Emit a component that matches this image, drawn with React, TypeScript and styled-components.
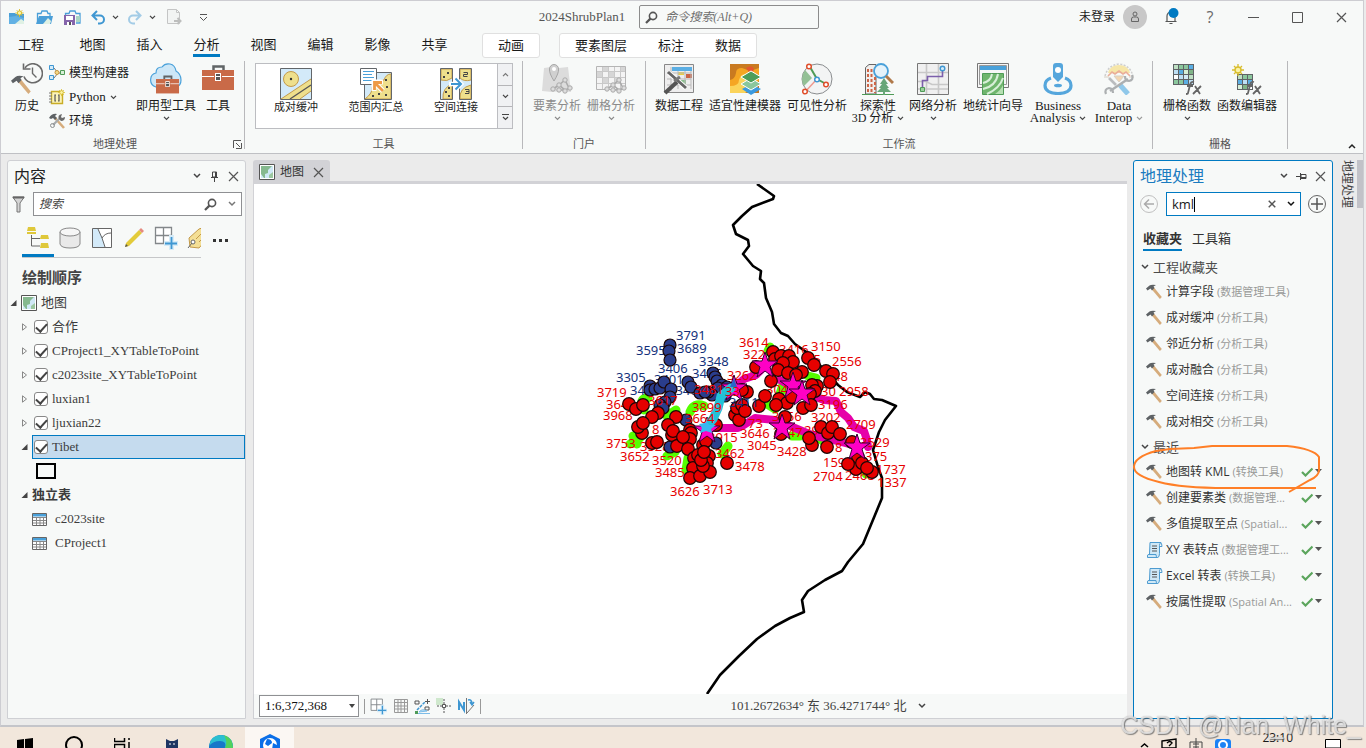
import React from "react";
import styled, { createGlobalStyle } from "styled-components";

const song = `"Liberation Serif", "Noto Sans CJK SC", serif`;
const sans = `"Open Sans", "Noto Sans CJK SC", sans-serif`;
const blue = "#007ac2";
const grey = "#6a6a6a";

const Global = createGlobalStyle`
  * { box-sizing: border-box; }
  body { margin: 0; background: #ebebeb; color: #1a1a1a; font: 12px/16px ${song}; }
  button { border: 0; padding: 0; background: none; font: inherit; color: inherit; cursor: pointer; }
  input, select { font: inherit; color: inherit; border: 0; outline: 0; background: none; padding: 0; min-width: 0; }
  svg { display: block; flex: none; }
  ul { list-style: none; margin: 0; padding: 0; }
  h2, h3 { margin: 0; font-weight: 400; }
`;

/* ---------- page frame ---------- */

const Screen = styled.div`
  min-height: 100vh;
  display: flex;
  flex-direction: column;
  overflow: hidden;
`;
const AppWindow = styled.div`
  flex: 1;
  display: flex;
  flex-direction: column;
  margin-right: 2px;
  border: 1px solid #cdcdd2;
  border-bottom: 2px solid #c4c5ca;
`;
const Body = styled.div`
  flex: 1;
  display: flex;
  gap: 6px;
  padding: 6px 0 6px 6px;
  min-height: 0;
`;

/* ---------- title bar ---------- */

const TitleBar = styled.header`
  display: grid;
  grid-template-columns: 1fr auto 1fr;
  align-items: center;
  height: 32px;
  background: #f7f9f8;
`;
const QuickTools = styled.div`
  display: flex;
  align-items: center;
  padding-left: 7px;
`;
const QuickButton = styled.button<{ $w?: number; $dim?: boolean }>`
  width: ${(p) => p.$w ?? 28}px;
  opacity: ${(p) => (p.$dim ? 0.45 : 1)};
`;
const TitleCenter = styled.div`
  display: flex;
  align-items: center;
  gap: 14px;
  padding-right: 6px;
  color: #555;
  font-size: 13px;
`;
const CommandSearch = styled.label`
  display: flex;
  align-items: center;
  gap: 7px;
  width: 180px;
  height: 24px;
  padding: 0 5px;
  border: 1px solid #8c8c8c;
  border-radius: 2px;
  font-size: 12px;
  input { flex: 1; }
  input::placeholder { font-style: italic; color: #6e6e6e; opacity: 1; }
`;
const TitleRight = styled.div`
  display: flex;
  align-items: center;
  justify-content: flex-end;
`;
const Avatar = styled.button`
  display: grid;
  place-items: center;
  width: 24px;
  height: 24px;
  margin: 0 6px 0 8px;
  border-radius: 50%;
  background: #c8c8c8;
`;
const WinButton = styled.button<{ $w?: number }>`
  display: grid;
  place-items: center;
  width: ${(p) => p.$w ?? 44}px;
  height: 32px;
  color: ${grey};
  font: 16px/20px "Open Sans", sans-serif;
`;

/* ---------- ribbon ---------- */

const TabRow = styled.nav`
  display: flex;
  height: 26px;
  background: #f7f9f8;
  font-size: 13px;
`;
const Tab = styled.button<{ $first?: boolean; $active?: boolean }>`
  width: ${(p) => (p.$first ? 60 : 57)}px;
  margin-right: ${(p) => (p.$first ? 3 : 0)}px;
  height: 24px;
  span {
    display: inline-block;
    height: 24px;
    line-height: 24px;
    border-bottom: 3px solid ${(p) => (p.$active ? blue : "transparent")};
  }
`;
const ContextTabs = styled.div<{ $gap: number }>`
  display: flex;
  align-items: center;
  gap: 31px;
  height: 25px;
  margin-left: ${(p) => p.$gap}px;
  padding: 0 15px;
  border: 1px solid #e0e0e0;
  border-radius: 3px;
  background: #fff;
`;
const Ribbon = styled.section`
  display: flex;
  position: relative;
  height: 95px;
  padding-top: 2px;
  background: #f7f9f8;
  border-bottom: 1px solid #bfc0c4;
`;
const Group = styled.section<{ $w: number }>`
  display: flex;
  flex-direction: column;
  position: relative;
  width: ${(p) => p.$w}px;
  height: 88px;
  border-right: 1px solid #b8b8bb;
`;
const GroupBody = styled.div<{ $gap?: number; $pad?: number }>`
  flex: 1;
  display: flex;
  gap: ${(p) => p.$gap ?? 6}px;
  padding: 2px 0 0 ${(p) => p.$pad ?? 10}px;
`;
const GroupLabel = styled.div<{ $shift?: number }>`
  height: 13px;
  margin-bottom: -2px;
  padding-right: ${(p) => p.$shift ?? 0}px;
  line-height: 13px;
  font-size: 11px;
  text-align: center;
  color: #555;
`;
const Launcher = styled.button`
  position: absolute;
  right: 2px;
  bottom: 0;
`;
const BigButton = styled.button<{ $w: number; $off?: boolean }>`
  display: flex;
  flex-direction: column;
  align-items: center;
  width: ${(p) => p.$w}px;
  height: 64px;
  color: ${(p) => (p.$off ? "#8b8b8b" : "#1a1a1a")};
  line-height: 12px;
  white-space: nowrap;
  > svg:first-child { margin-bottom: 5px; }
`;
const Latin = styled.span`
  font-size: 13px;
`;
const LabelLine = styled.span`
  display: flex;
  align-items: center;
  gap: 4px;
  height: 12px;
`;
const SmallStack = styled.div`
  display: flex;
  flex-direction: column;
  width: 79px;
  margin: -2px 0 0 4px;
`;
const SmallButton = styled.button`
  display: flex;
  align-items: center;
  gap: 4px;
  height: 24px;
  white-space: nowrap;
`;
const Gallery = styled.div`
  display: flex;
  width: 258px;
  height: 66px;
  border: 1px solid #bcbdc1;
  background: #fff;
`;
const GalleryItem = styled.button`
  display: flex;
  flex-direction: column;
  align-items: center;
  gap: 1px;
  width: 80px;
  padding-top: 4px;
  font-size: 11px;
  line-height: 12px;
`;
const GalleryScroll = styled.div`
  display: flex;
  flex-direction: column;
  width: 15px;
  margin-left: auto;
  border-left: 1px solid #bcbdc1;
  button {
    flex: 1;
    display: grid;
    place-items: center;
    background: #f0f1f3;
    border-bottom: 1px solid #b5b5b8;
  }
  button:last-child { border-bottom: 0; }
`;
const Collapse = styled.button`
  position: absolute;
  right: 6px;
  bottom: 4px;
`;

/* ---------- panels ---------- */

const Panel = styled.aside<{ $w: number; $active?: boolean }>`
  position: relative;
  flex: none;
  width: ${(p) => p.$w}px;
  border: 1px solid ${(p) => (p.$active ? blue : "#cfd0d4")};
  border-radius: 3px 3px 0 0;
  background: #f7f9f8;
`;
const PanelHead = styled.header<{ $active?: boolean }>`
  display: flex;
  align-items: center;
  gap: 8px;
  height: 30px;
  padding: 0 6px;
  h2 { flex: 1; font: 16px/20px ${sans}; color: ${(p) => (p.$active ? "#1a7bc0" : "#222")}; }
`;
const SearchRow = styled.div<{ $gap: number }>`
  display: flex;
  align-items: center;
  gap: ${(p) => p.$gap}px;
  height: 26px;
  padding: 0 3px 0 4px;
`;
const SearchBox = styled.label<{ $active?: boolean }>`
  flex: 1;
  display: flex;
  align-items: center;
  gap: 11px;
  min-width: 0;
  height: 24px;
  padding: 0 5px;
  border: 1px solid ${(p) => (p.$active ? blue : "#8f9093")};
  background: #fff;
  > input { flex: 1; }
  > input::placeholder { font-style: italic; color: #444; opacity: 1; }
`;
const Typed = styled.span`
  flex: 1;
  display: flex;
  align-items: center;
  font: 13px/18px ${sans};
  input { field-sizing: content; }
`;
const Caret = styled.i`
  width: 1px;
  height: 15px;
  background: #000;
`;
const ViewTabs = styled.div`
  display: flex;
  align-items: center;
  height: 41px;
  padding-left: 14px;
`;
const ViewStrip = styled.div`
  display: flex;
  width: 179px;
  height: 35px;
  margin-top: 5px;
  border-bottom: 1px solid #c6c7c9;
  overflow: hidden;
`;
const ViewTab = styled.button<{ $on?: boolean }>`
  flex: none;
  display: grid;
  place-items: center;
  width: 32px;
  border-bottom: 3px solid ${(p) => (p.$on ? blue : "transparent")};
`;
const MoreViews = styled.button`
  display: grid;
  place-items: center;
  width: 38px;
  height: 24px;
  margin-top: 6px;
`;
const TreeTitle = styled.h3`
  height: 33px;
  padding: 5px 14px 0;
  font: bold 15px/28px ${sans};
  color: #444;
`;
const TreeRow = styled.li<{ $indent?: number; $bold?: boolean }>`
  display: flex;
  align-items: center;
  gap: 4px;
  height: 24px;
  padding-left: ${(p) => p.$indent ?? 2}px;
  color: #3c3c3c;
  font-size: 13px;
  font-weight: ${(p) => (p.$bold ? 700 : 400)};
`;
const Layer = styled.label<{ $on?: boolean }>`
  flex: 1;
  display: flex;
  align-items: center;
  gap: 4px;
  height: 24px;
  padding-left: 1px;
  border: 1px solid ${(p) => (p.$on ? blue : "transparent")};
  background: ${(p) => (p.$on ? "#c5dbee" : "transparent")};
`;
const Check = styled.input`
  appearance: none;
  display: grid;
  place-items: center;
  width: 14px;
  height: 14px;
  margin: 0;
  border: 1px solid #888;
  border-radius: 3px;
  background: #fff;
  &:checked::after {
    content: "";
    width: 5px;
    height: 9px;
    border: solid #444;
    border-width: 0 2px 2px 0;
    transform: translateY(-1px) rotate(42deg);
  }
`;
const Swatch = styled.i`
  width: 20px;
  height: 16px;
  border: 2px solid #000;
`;

/* ---------- map ---------- */

const MapPane = styled.main`
  flex: 1;
  min-width: 0;
  display: flex;
  flex-direction: column;
  margin-left: 1px;
`;
const MapTabs = styled.div`
  display: flex;
  height: 24px;
  border-bottom: 3px solid #d2d2d6;
`;
const MapTab = styled.div`
  display: flex;
  align-items: center;
  gap: 5px;
  width: 77px;
  height: 24px;
  padding: 0 6px;
  border-radius: 3px 3px 0 0;
  background: #d2d2d6;
  color: #333;
  button { margin-left: auto; }
`;
const MapView = styled.div`
  flex: 1;
  min-height: 0;
  position: relative;
  overflow: hidden;
  background: #fff;
  border-left: 1px solid #d2d2d6;
  > svg { position: absolute; inset: 0; width: 100%; height: 100%; }
`;
const MapStatus = styled.footer`
  display: flex;
  align-items: center;
  gap: 5px;
  height: 25px;
  padding-left: 5px;
  background: #f7f9f8;
  border: solid #cfd0d4;
  border-width: 0 0 1px 1px;
`;
const ScaleBox = styled.div`
  position: relative;
  width: 100px;
  height: 22px;
  select {
    appearance: none;
    width: 100%;
    height: 100%;
    padding-left: 5px;
    border: 1px solid #8f9093;
    background: #fff;
    font-size: 13px;
    color: #111;
  }
  svg { position: absolute; right: 4px; top: 9px; pointer-events: none; }
`;
const Rule = styled.i`
  width: 1px;
  height: 15px;
  background: #999;
`;
const Coordinates = styled.div`
  flex: 1;
  display: flex;
  justify-content: center;
  align-items: center;
  gap: 10px;
  padding-left: 44px;
  font-size: 13px;
  color: #444;
`;

/* ---------- geoprocessing ---------- */

const ToolTabs = styled.div`
  display: flex;
  gap: 10px;
  height: 38px;
  padding: 10px 9px 0;
  font: 13px/18px ${sans};
`;
const ToolTab = styled.button<{ $on?: boolean }>`
  height: 24px;
  color: #333;
  font-weight: ${(p) => (p.$on ? 700 : 400)};
  border-bottom: 2px solid ${(p) => (p.$on ? blue : "transparent")};
`;
const Section = styled.h3`
  display: flex;
  align-items: center;
  gap: 4px;
  height: 24px;
  padding-left: 7px;
  font: 13px/18px ${sans};
  color: #4c4c4c;
`;
const ToolRow = styled.button`
  display: flex;
  align-items: center;
  width: 100%;
  height: 26px;
  padding: 0 10px 0 12px;
  font: 12px/18px ${sans};
  color: #333;
  white-space: nowrap;
`;
const ToolName = styled.span`
  flex: 1;
  min-width: 0;
  margin: 0 9px 0 3px;
  overflow: hidden;
  text-overflow: ellipsis;
  text-align: left;
  color: #999;
  font-size: 11px;
  b { font-weight: 400; font-size: 12px; color: #333; margin-right: 3px; }
`;
const Annotation = styled.svg`
  position: absolute;
  left: -2px;
  top: 280px;
  pointer-events: none;
`;
const SideStrip = styled.aside`
  flex: none;
  display: flex;
  gap: 2px;
  width: 24px;
`;
const SideTab = styled.button`
  writing-mode: vertical-rl;
  text-orientation: sideways;
  height: 48px;
  line-height: 15px;
  color: #444;
`;
const SideThumb = styled.i`
  width: 6px;
  height: 48px;
  margin-left: auto;
  background: #c2c2c8;
`;

/* ---------- taskbar ---------- */

const Taskbar = styled.footer`
  display: flex;
  height: 21px;
  overflow: hidden;
  background: #f2e7dc;
`;
const TaskItem = styled.button<{ $on?: boolean }>`
  display: flex;
  justify-content: center;
  width: 49px;
  background: ${(p) => (p.$on ? "#fbf7f3" : "transparent")};
`;
const Tray = styled.div`
  display: flex;
  gap: 12px;
  margin-left: auto;
  padding-right: 25px;
  font: 12px/22px "Open Sans", sans-serif;
  time { margin: 0 20px 0 19px; }
`;
const Watermark = styled.div`
  position: fixed;
  right: 5px;
  bottom: 8px;
  font: 25px/30px "Liberation Sans", sans-serif;
  color: rgba(245, 245, 245, 0.75);
  text-shadow: 1px 1px 1px rgba(90, 90, 90, 0.7), 0 0 1px rgba(90, 90, 90, 0.5);
  pointer-events: none;
`;

/* ---------- icons ---------- */

type IconProps = { children: React.ReactNode; w?: number; h?: number; box?: string };
const Icon = ({ children, w = 16, h = w, box }: IconProps) => (
  <svg width={w} height={h} viewBox={box ?? `0 0 ${w} ${h}`} fill="none" aria-hidden="true">
    {children}
  </svg>
);

const Chevron = ({ up = false, color = "#444", w = 7 }) => (
  <Icon w={w} h={w === 7 ? 5 : 6} box="0 0 8 6">
    <path d={up ? "M1 5 4 2 7 5" : "M1 1 4 4 7 1"} stroke={color} strokeWidth="1.5" />
  </Icon>
);
const Close = ({ s = 11 }) => (
  <Icon w={s} box="0 0 11 11">
    <path d="M1 1 10 10M10 1 1 10" stroke="#555" strokeWidth={s < 10 ? 2 : 1.2} />
  </Icon>
);
const Lens = () => (
  <Icon w={13} box="0 0 13 13">
    <circle cx="8" cy="5" r="3.6" stroke="#555" strokeWidth="1.6" />
    <path d="M5.4 7.6 1 12" stroke="#555" strokeWidth="2.2" />
  </Icon>
);
const Pin = ({ side = false }) => (
  <Icon w={11} box="0 0 11 11">
    <g transform={side ? "rotate(90 5.500 5.500)" : undefined}>
      <path d="M3.500 1h4v5h-4zM2 6.500h7M5.500 6.500V11M6.500 1v5" stroke="#444" />
    </g>
  </Icon>
);
const Sun = ({ x = 0, y = 0, s = 1 }) => (
  <g transform={`translate(${x} ${y}) scale(${s})`} stroke="#d9bd2c">
    <path d="M0-6V6M-6 0H6M-4-4 4 4M4-4-4 4" strokeWidth="1.3" />
    <circle r="3" fill="#fbf3a5" strokeWidth="1.4" />
  </g>
);
const NewProject = () => (
  <Icon w={17}>
    <path d="M1 4h6l1 1h8v10H1z" fill="#4a9fd8" />
    <path d="M1 15V8l7-1 8 2v6z" fill="#62b1e4" />
    <path d="m7 15 6-5 3 2v3z" fill="#dff1e4" />
    <Sun x={11.5} y={4} s={0.7} />
  </Icon>
);
const OpenProject = () => (
  <Icon w={17}>
    <path d="M1.500 14V4.500H5L6 2h5l1 2.500h2V8" stroke="#4a9fd8" strokeWidth="1.300" />
    <path d="M3 7h14l-2 8H0z" fill="#4a9fd8" />
    <path d="m7 15 5-6 3 3-1 3z" fill="#dff1e4" />
  </Icon>
);
const SaveProject = () => (
  <Icon w={17}>
    <path d="M1.500 8V4.500H5L6 2h5l1 2.500h4V14h-4" stroke="#4a9fd8" strokeWidth="1.300" />
    <path d="M12 7h4v6h-4z" fill="#a9d6c4" />
    <path d="M0 6h11v10H0z" fill="#8565ab" />
    <path d="M2 7h7v4H2zM3 13h5v3H3z" fill="#fff" />
    <path d="M5 13h2v3H5z" fill="#555" />
  </Icon>
);
const Undo = ({ flip = false }) => (
  <Icon w={15}>
    <g transform={flip ? "translate(15 0) scale(-1 1)" : undefined}>
      <path d="M6 1 1.500 5.500 6 10M2 5.500h7a4 4 0 0 1 0 8H7" stroke="#3f97d2" strokeWidth="2" />
    </g>
  </Icon>
);
const Export = () => (
  <Icon w={16}>
    <path d="M1.500.5h9l3 3v11h-12zM10.500.5v3h3" stroke="#888" fill="#eee" />
    <path d="M8 12h6M11.500 9l3 3-3 3" stroke="#777" strokeWidth="2" />
  </Icon>
);
const Customize = () => (
  <Icon w={9}>
    <path d="M1 1.500h7M1 4l3.500 3.500L8 4" stroke="#555" />
  </Icon>
);
const Bell = () => (
  <Icon w={18}>
    <path d="M3.500 13.500h11M5 13V8a4 4 0 0 1 4-4 4 4 0 0 1 4 4v5M7.500 15.500h3" stroke="#555" strokeWidth="1.200" />
    <circle cx="11.500" cy="5" r="5" fill={blue} />
  </Icon>
);
const Person = () => (
  <Icon w={12}>
    <circle cx="6" cy="3" r="2" stroke="#666" />
    <path d="M2.500 10.500V8q0-2 2-2h3q2 0 2 2v2.500z" stroke="#666" />
  </Icon>
);
const HammerShape = () => (
  <g>
    <path d="m5 4.500 2.400-1.700 8.400 10.300-1.900 2z" fill="#d6ac7c" />
    <path d="M0 4.500 3.500 1.500Q5.500.2 10 1L7.500 2.500 8.500 4 6 6.500 4.500 4.500 1.500 6.500z" fill="#5e6265" />
  </g>
);
const Hammer = () => (
  <Icon w={17} h={16}>
    <HammerShape />
  </Icon>
);
const History = () => (
  <Icon w={32}>
    <path d="M13 13.500a9.500 9.500 0 1 0 1-8.500" stroke={grey} strokeWidth="1.600" />
    <path d="M12.500.5V6h7" stroke={grey} strokeWidth="1.600" />
    <path d="M21.500 4.500v6l4 4" stroke={grey} strokeWidth="1.400" />
    <g transform="translate(0 12) scale(1.250)">
      <HammerShape />
    </g>
  </Icon>
);
const Model = () => (
  <Icon w={16}>
    <path d="M5 3 9 8 5 13M8 8h4" stroke="#777" />
    <path d="M.5.5h4v4h-4zM.5 10.500h4v4h-4z" fill="#d5ebf8" stroke="#3f97d2" />
    <circle cx="8" cy="7.500" r="2" fill="#f4d88a" stroke="#c8963c" />
    <path d="M11.500 5.500h4v4h-4z" fill="#d7efd8" stroke="#4f9b57" />
  </Icon>
);
const Python = () => (
  <Icon w={16}>
    <path d="M2.500 2.500h11v12h-11z" fill="#fbf3b8" stroke="#c9ad26" strokeWidth="1.400" />
    <path d="M0 4h3M0 7h3M0 10h3M0 13h3" stroke="#777" />
    <path d="M7 6H6v6h1M9 6h1v6H9" stroke="#555" strokeWidth="1.200" />
    <Sun x={12.5} y={3.5} s={0.6} />
  </Icon>
);
const Environment = () => (
  <Icon w={16}>
    <path d="m6 5 9 10" stroke="#d6ac7c" strokeWidth="2.600" />
    <path d="M0 5q3-5 8-4L6 3l2 2-2 2-2-2-2 1z" fill="#5e6265" />
    <path d="m4 12 7-7" stroke="#a7aaac" strokeWidth="2.200" />
    <path d="M10 6q-2-4 3-5l-1 3 1 1 3-1q0 4-4 4z" fill={grey} />
    <circle cx="3.500" cy="12.500" r="2" stroke="#8c8f91" />
  </Icon>
);
const Box = () => (
  <>
    <path d="M11.500 7V3.500h10V7" stroke="#616567" strokeWidth="2.500" />
    <path d="M0 7h32v20H0z" fill="#c96a48" />
    <path d="M0 13.500h12M20 13.500h12" stroke="#fff" />
    <path d="M13 10h6v8h-6z" fill="#fff" />
    <path d="M14 11h4v2h-4zM14 14h4v3h-4z" fill="#555" />
  </>
);
const Toolbox = () => (
  <Icon w={32}>
    <Box />
  </Icon>
);
const CloudToolbox = () => (
  <Icon w={32}>
    <path d="M6 24Q0 22 .7 16 1 11 6 10 6 4 12 4q3-4 8-3 5 1 6 7 5 3 5 9t-5 7z" fill="#cde7f7" stroke="#4aa1da" strokeWidth="1.200" />
    <g transform="translate(6 11) scale(.72)">
      <Box />
    </g>
  </Icon>
);
const Tile = ({ children }: { children?: React.ReactNode }) => (
  <>
    <path d="M1 1h30v30H1z" fill="#d3eaf9" />
    {children}
    <path d="M.5.5h31v31H.5z" stroke="#62666a" />
  </>
);
const PairBuffer = () => (
  <Icon w={32}>
    <Tile>
      <circle cx="11" cy="11" r="7.500" fill="#eedf8c" stroke="#c39a4a" />
      <circle cx="11" cy="11" r="1.200" fill="#333" />
      <path d="M1 31 31 11v12L20 31z" fill="#eedf8c" />
      <path d="M1 31 31 11M20 31l11-8" stroke="#c39a4a" />
      <path d="m10 31 21-14" stroke="#555" strokeWidth="1.300" />
    </Tile>
  </Icon>
);
const Summarize = () => (
  <Icon w={32}>
    <path d="M4.500 4.500h27v27h-27z" fill="#d3eaf9" />
    <path d="M5 31q8-6 7-12 5-7 12-7 2-6 7-6v25z" fill="#eedf8c" stroke="#c39a4a" />
    <path d="M4.500 4.500h27v27h-27z" stroke="#62666a" />
    <path d="M25 11h2v2h-2zM26 18h2v2h-2zM25 26h2v2h-2zM18 25h2v2h-2zM12 27h2v2h-2zM21 14h2v2h-2z" fill="#444" />
    <path d="M.5.5h16v16H.5z" fill="#fff" stroke="#62666a" />
    <path d="M3 3.500h11M3 6.500h9M3 9.500h11M3 12.500h9" stroke="#4aa1da" />
    <path d="m23 23-8-8M14 23v-9h9" stroke="#fff" strokeWidth="5" />
    <path d="m23 23-8-8M14.500 22v-7.500H22" stroke="#ee9a45" strokeWidth="2.800" />
  </Icon>
);
const SpatialJoin = () => (
  <Icon w={32}>
    <path d="M.5.5h12v31H.5zM19.500.5h12v31h-12z" fill="#d3eaf9" />
    <path d="M1 1h11v9q-5 4-11 2zM12 31H3q-1-11 9-15zM20 1h11v11q-7 2-11-2zM31 31H20q-1-11 11-14z" fill="#eedf8c" stroke="#c39a4a" />
    <path d="M.5.5h12v31H.5zM19.500.5h12v31h-12z" stroke="#62666a" />
    <path d="M7 4h2v2H7zM3 8h2v2H3zM8 19h2v2H8zM5 23h2v2H5zM8 27h2v2H8z" fill="#444" />
    <path d="M23.500 4.500h4v2h-4v2h4M25 21.500h4v4h-4M26 23.500h3" stroke="#444" />
    <path d="M9 16h11M15 10l6 6-6 6" stroke="#fff" strokeWidth="4.500" />
    <path d="M11 16h9M15.500 10.500 21 16l-5.500 5.500" stroke="#3f97d2" strokeWidth="2" />
  </Icon>
);
const Net = () => (
  <g stroke="#aaa" fill="#ddd">
    <path d="m12 26 6-4 6 5 5-2M18 22l6-5 4 8M18 27l6 0" fill="none" strokeWidth="1.600" />
    {[[12, 26], [18, 22], [24, 17], [29, 25], [24, 28], [18, 27]].map(([x, y]) => (
      <circle key={x * 40 + y} cx={x} cy={y} r="2.200" />
    ))}
  </g>
);
const FeatureAnalysis = () => (
  <Icon w={32}>
    <path d="m3 5 7-1 8 1 9-1 3 25-10-1-9 1-10-1z" fill="#dcdcdc" />
    <path d="M13 18Q8 10 8.500 6a4.500 4.500 0 0 1 9 0q.5 4-4.500 12z" fill="#d0d0d0" stroke="#a7a7a7" />
    <circle cx="13" cy="6" r="2" fill="#fff" />
    <Net />
  </Icon>
);
const RasterAnalysis = () => (
  <Icon w={32}>
    <path d="M1.500 3.500h29v23h-29z" fill="#f4f4f4" stroke="#b5b5b5" />
    <path d="M14 9h5v5h-5zM20 15h5v5h-5zM8 15h5v5H8zM26 4h4v4h-4zM2 9h5v5H2zM8 4h5v4H8z" fill="#d6d6d6" />
    <path d="M2 8.500h28M2 14.500h28M2 20.500h28M7.500 4v22M13.500 4v22M19.500 4v22M25.500 4v22" stroke="#c9c9c9" />
    <Net />
  </Icon>
);
const DataEngineering = () => (
  <Icon w={32}>
    <path d="M1.500 1.500h29v28h-29z" fill="#eee" stroke="#888" />
    <path d="M9 4h20v4H9z" fill="#5aaee3" />
    <path d="M15 9h6v3h-6z" fill="#e9cf45" />
    <path d="M23 11h6v4h-6z" fill="#cc6546" />
    <path d="M18 17h5v5h-5z" fill="#8abf8d" />
    <path d="M4 10h24M4 16h24M4 22h24M8 4v24M15 8v18M22 8v18M28 8v18" stroke="#b9b9b9" />
    <path d="m6 10 17 15" stroke="#fff" strokeWidth="5" />
    <path d="m5 9 18 16" stroke="#666" strokeWidth="3" />
    <path d="M14 19 2 30" stroke="#555" strokeWidth="4" />
    <path d="m11 18 6-4" stroke="#777" strokeWidth="3" />
  </Icon>
);
const Suitability = () => (
  <Icon w={32}>
    <path d="M1 1h29v29H1z" fill="#c97a20" />
    <path d="M1 30V17q5-1 6-7 0-5 6-5l8 3 9-3v13l-8 6-9 1-1 5z" fill="#f5a623" />
    <path d="M1 30v-7q9 0 9-6 2-7 7-6l4 6 3 8-8 5z" fill="#fbd45a" />
    <path d="M17 5q6-4 8 1-1 4-5 3z" fill="#e4572e" />
    <path d="m13 26 9-5 10 5-10 6z" fill="#3c9ade" />
    <path d="m12 21 10-6 10 6-10 6z" fill="#8bc79d" stroke="#fff" />
    <path d="m12 14 10-6 10 6-10 6z" fill="#4d9e5a" stroke="#fff" />
  </Icon>
);
const Visibility = () => (
  <Icon w={32}>
    <circle cx="16" cy="16" r="15" stroke="#8a8d8f" fill="#f3f4f4" />
    <path d="M1 16q0-5 3-9l7 8-8 8q-2-3-2-7z" fill="#93c095" />
    <path d="m9 4 7 12" stroke="#4f9b57" strokeWidth="2" />
    <path d="m16 16 9 5" stroke="#4f9b57" strokeWidth="2" />
    <path d="M16 16 4 29" stroke="#ef9a90" strokeWidth="1.500" />
    <g fill="#fff" stroke="#e04f2b" strokeWidth="1.500">
      <circle cx="8" cy="3.500" r="2.300" />
      <circle cx="25" cy="21.500" r="2.300" />
      <circle cx="4" cy="28.500" r="2.300" />
    </g>
    <circle cx="16" cy="16.500" r="2.300" fill="#fff" stroke="#3f97d2" strokeWidth="1.500" />
  </Icon>
);
const Exploratory = () => (
  <Icon w={32}>
    <path d="M3.500 31V4.500L7 1.500h7V31z" fill="#f1eeec" stroke="#666" />
    <path d="M6 6v24M9.500 6v24M13 14v16" stroke="#cc6546" strokeWidth="2" strokeDasharray="3 2" />
    <path d="M0 31.500h32" stroke="#4f9b57" />
    <path d="m22 15 4 6h-2l3 4h-2l4 4H15l4-4h-2l3-4h-2zM21 29h2v3h-2z" fill="#68a678" />
    <circle cx="19" cy="8" r="7" fill="#e5f3fb" stroke="#4aa1da" strokeWidth="1.800" />
    <path d="m24 13 7 7" stroke="#b0794a" strokeWidth="3" />
  </Icon>
);
const NetworkIcon = () => (
  <Icon w={32}>
    <path d="M.5.5h31v31H.5z" fill="#f0f0f0" />
    <path d="M1 9.500h30M1 18.500h8l6 3h16M9.500 1v30M21.500 1v30M1 26h30" stroke="#c8c8c8" strokeWidth="1.600" />
    <path d="M.5.5h31v31H.5z" stroke="#777" />
    <path d="M5.500 25v-7.500h5v-4h15V6" stroke="#7c5fab" strokeWidth="1.600" />
    <circle cx="25.500" cy="5.500" r="2.300" fill="#d5ebf8" stroke="#3f97d2" strokeWidth="1.400" />
    <path d="M3.500 24.500h4v4h-4z" fill="#9ccf9c" stroke="#4f9b57" />
  </Icon>
);
const Geostat = () => (
  <Icon w={32}>
    <path d="M.5.5h31v24H.5z" fill="#f6f6f6" stroke="#777" />
    <path d="M3 3h26v4H3z" fill="#4aa1da" />
    <path d="M2.500 2.500h27v19h-27z" stroke="#999" />
    <path d="M5.500 10.500h21v21h-21z" fill="#6fb56d" stroke="#4f9b57" />
    <path d="M6 20q8-2 9-9M6 26q13-3 15-15M10 31q13-6 16-16" stroke="#d7efd8" strokeWidth="2" />
    <path d="M18 31q6-4 8-9v9z" fill="#b7e0b3" />
  </Icon>
);
const Business = () => (
  <Icon w={32}>
    <path d="M9 15q-6 2-6 7.500c0 5 5 8 13 8s13-3 13-8q0-5.500-6-7.500" stroke="#55a6dc" strokeWidth="3.200" />
    <path d="M11 3q0-3 3-3h4q3 0 3 3v11l-5 5-5-5z" fill="#55a6dc" />
    <circle cx="16" cy="7" r="3" fill="#fff" />
    <ellipse cx="16" cy="22.500" rx="4" ry="1.800" fill="#55a6dc" />
  </Icon>
);
const Interop = () => (
  <Icon w={32}>
    <g opacity=".65">
      <path d="M5 10Q7 2 16 2t11 8z" fill="#f6dc7e" />
      <path d="M2 13Q5 2 16 1q11 1 14 12" stroke="#b8b8b8" strokeWidth="1.500" strokeDasharray="2 1.500" />
      <path d="m5 13 4-4 3 2 4-3 4 3 3-2 4 4" stroke="#e48565" strokeWidth="1.600" />
      <path d="M1 14h5M26 14h5M11 13h10l-5 6z" fill="#f2c48d" stroke="#c9b9a9" />
      <path d="m6 15 7 7" stroke="#9a9da0" strokeWidth="2.600" />
      <path d="m17 22 8 9" stroke="#5aaee3" strokeWidth="5" />
      <path d="M25 16 7 28" stroke="#85898c" strokeWidth="2.400" />
      <path d="M29 12q2 5-3 6-4 0-4-5M3 31q-2-5 3-6 4 0 4 5" stroke="#85898c" strokeWidth="2.200" />
    </g>
  </Icon>
);
const Raster = ({ n = 4 }) => {
  const c = ["#bfe0c4", "#fff", "#5aaee3", "#8bc79d", "#d5ebf8", "#7fb487", "#bfe0f5", "#8bc79d", "#bfe0f5", "#d7efd8", "#5aaee3"];
  return (
    <g stroke="#5f6366">
      {Array.from({ length: n * n }, (_, i) => (
        <rect key={i} x={0.5 + (i % n) * 5} y={1.5 + Math.floor(i / n) * 5} width="5" height="5" fill={c[(i * 7) % 11]} />
      ))}
    </g>
  );
};
const Fx = () => (
  <g stroke="#666" strokeWidth="1.800">
    <path d="M23 19q-3-1-4 3l-2 8q0 1-2 1M16 23h6M24 23l5 8M30 23l-8 8" />
  </g>
);
const RasterFunction = () => (
  <Icon w={32} h={32}>
    <g transform="translate(2 0)"><Raster /></g>
    <Fx />
  </Icon>
);
const FunctionEditor = () => (
  <Icon w={32}>
    <g transform="translate(6 10)">
      <Raster n={3} />
    </g>
    <Sun x={7} y={7} s={1} />
    <Fx />
  </Icon>
);
const MapGlyph = () => (
  <Icon w={16}>
    <path d="M.5.5h15v15H.5z" fill="#fff" stroke="#555" />
    <path d="M2 2h12v12H2z" fill="#cfe8f6" />
    <path d="M2 2h11l-4 4v3l-3 1v4H5L2 10z" fill="#86b98f" />
    <path d="M10 14v-3l4-3v6z" fill="#9cc7a0" />
  </Icon>
);
const TableGlyph = () => (
  <Icon w={15} h={13}>
    <path d="M.5.5h14v12H.5z" fill="#fff" stroke="#666" />
    <path d="M1 1h13v2.500H1z" fill="#4aa1da" />
    <path d="M1 4.500h13M1 7.500h13M1 10h13M4.500 4v8M8 4v8M11.500 4v8" stroke="#888" />
  </Icon>
);
const GridPlus = ({ s = 24 }) => (
  <Icon w={s} box="0 0 24 24">
    <path d="M1.500 1.500h16v16h-16zM9.500 1.500v16M1.500 9.500h16" stroke="#83878a" fill="#fff" strokeWidth="1.300" />
    <path d="M17.500 9v15M10 17.500h15" stroke="#d5ebf8" strokeWidth="5" />
    <path d="M17.500 11v12M11 17.500h12" stroke="#3f97d2" strokeWidth="1.800" />
  </Icon>
);
const Script = () => (
  <Icon w={17} h={16}>
    <path d="M4 .5h11q-1.500 1-1.500 3v8q0 4-2 4H1.500q-1-3 2-3.500z" fill="#cfe8f6" stroke="#4d9bd0" />
    <path d="M13.500 4.500H16q0-4-2-4M3 12.500h7q0 3 1.500 3" stroke="#4d9bd0" />
    <path d="M6 4h5M6 6.500h5M6 9h5" stroke="#555" />
  </Icon>
);
const Tick = () => (
  <Icon w={12} h={10}>
    <path d="M1 5 4.500 8.500 11.500 1.500" stroke="#5ba55c" strokeWidth="2.200" />
  </Icon>
);
const Expander = ({ open = false }) => (
  <Icon w={7} h={8}>
    {open ? <path d="M6.500 1v6h-6z" fill="#444" /> : <path d="M1.500.8 5.500 4l-4 3.200z" stroke="#888" />}
  </Icon>
);

/* ---------- map contents ---------- */

const coast =
  "M757 184 774 196 773 199 752 207 742 216 733 225 736 234 748 240 749 246 743 254 753 266 761 271 760 279 764 283 766 298 772 312 774 324 781 333 788 336 795 344 812 356 825 371 838 385 847 392 860 397 865 392 870 394 874 399 882 400 896 406 885 420 879 432 873 450 878 467 882 478 882 498 875 515 863 544 848 562 842 571 825 580 808 591 802 600 804 612 790 618 775 626 757 639 739 656 720 675 707 694";

const reds: [number, number][] = [
  [629, 404], [636, 409], [643, 405], [658, 413], [652, 417], [642, 433], [638, 427], [643, 423], [652, 443], [657, 442],
  [676, 417], [668, 425], [672, 435], [673, 431], [677, 446], [690, 430], [691, 433], [690, 439], [703, 445], [683, 437],
  [688, 449], [694, 458], [698, 455], [709, 456], [707, 463], [693, 468], [690, 478], [700, 476], [710, 472], [727, 463],
  [716, 425], [703, 466], [747, 392], [742, 390], [759, 406], [765, 396], [735, 415], [739, 420], [737, 408], [742, 405],
  [745, 411], [756, 367], [706, 441], [773, 352], [775, 359], [781, 356], [789, 356], [793, 362], [783, 363], [778, 370],
  [771, 381], [808, 358], [814, 365], [788, 373], [802, 372], [796, 375], [826, 371], [833, 374], [830, 382], [817, 386],
  [812, 385], [815, 391], [810, 394], [779, 399], [787, 403], [776, 405], [792, 397], [803, 408], [811, 405], [785, 417],
  [821, 427], [828, 433], [832, 427], [840, 434], [812, 445], [809, 438], [827, 447], [781, 434], [852, 442], [858, 457],
  [856, 469], [862, 463], [872, 472], [848, 464], [867, 468], [701, 460], [704, 452],
];
const blues: [number, number][] = [
  [670, 345], [669, 351], [670, 360], [650, 386], [650, 390], [655, 389], [660, 388], [664, 382], [671, 389], [670, 397],
  [665, 402], [660, 405], [663, 408], [688, 382], [691, 387], [713, 373], [715, 377], [717, 381], [722, 385], [718, 388],
  [712, 395], [700, 393], [708, 392], [705, 392], [727, 387], [725, 396], [686, 420], [670, 447], [716, 443],
];
const greens =
  "M644 410q-6-12 4-12M630 444l10-6M633 436l4 8M667 456l8-4M690 412q4-10 14-6M676 410l-9 6M686 470l2-12M722 454l6-8M768 351l2-4M767 404l8 5M783 385l-4 12M792 436l8 0M820 439l6 4M808 376l8 2M855 461l2 4M866 474l6-2M783 364l4 0";
const redLabels: [string, number, number][] = [
  ["3719", 597, 397], ["364", 606, 409], ["3968", 603, 420], ["3753", 606, 448], ["3652", 620, 461], ["3520", 652, 465],
  ["3485", 655, 477], ["3626", 670, 496], ["3713", 703, 494], ["3478", 735, 471], ["3462", 715, 458], ["3915", 708, 442],
  ["3262", 727, 380], ["3646", 740, 438], ["73", 748, 428], ["3045", 747, 450], ["3428", 777, 456], ["3614", 739, 347],
  ["322", 743, 359], ["3416", 779, 354], ["3150", 811, 351], ["2556", 832, 366], ["48", 833, 381], ["2958", 839, 396],
  ["3196", 818, 409], ["30", 821, 396], ["3048", 766, 394], ["3266", 772, 421], ["3202", 811, 422], ["2709", 846, 429],
  ["3247", 773, 437], ["29", 804, 435], ["3529", 860, 447], ["375", 865, 461], ["159", 823, 467],
  ["2704", 813, 481], ["2468", 845, 480], ["8", 835, 452], ["8", 652, 434], ["3528", 640, 451],
  ["75", 806, 364],
];
const topLabels: [string, number, number][] = [
  ["3899", 692, 412], ["3664", 685, 423], ["3617", 648, 405], ["3481", 694, 394], ["33", 725, 396],
  ["1737", 876, 474], ["1337", 877, 487],
];
const blueLabels: [string, number, number][] = [
  ["3791", 676, 340], ["3689", 677, 353], ["3595", 636, 355], ["3348", 699, 366], ["3406", 658, 373], ["3401", 654, 384],
  ["3305", 616, 382], ["3426", 692, 378], ["3479", 630, 395], ["3346", 668, 395],
];
const Star = ({ x, y }: { x: number; y: number }) => (
  <path
    transform={`translate(${x} ${y})`}
    d="M0-13 3-4 13-4 5 2 8 12 0 6-8 12-5 2-13-4-3-4z"
    fill="#ff00c5"
    stroke="#3a0030"
    strokeWidth="1"
  />
);
const Labels = ({ items, color }: { items: [string, number, number][]; color: string }) => (
  <g fill={color} fontFamily="Noto Sans, sans-serif" fontSize="13">
    {items.map(([t, x, y]) => (
      <text key={`${t}-${x}`} x={x} y={y}>
        {t}
      </text>
    ))}
  </g>
);
const Dots = ({ items, color, r }: { items: [number, number][]; color: string; r: number }) => (
  <g fill={color} stroke="#1a0505" strokeWidth="1.200">
    {items.map(([x, y], i) => (
      <circle key={i} cx={x} cy={y} r={r} />
    ))}
  </g>
);
const MapDrawing = () => (
  <svg viewBox="254 184 873 510" preserveAspectRatio="xMidYMid slice" fill="none" role="img" aria-label="地图">
    <path d={coast} stroke="#000" strokeWidth="2.600" strokeLinejoin="round" />
    <path d={greens} stroke="#55ff00" strokeWidth="9" strokeLinecap="round" />
    <g stroke="#e600a9" strokeWidth="8" strokeLinecap="round" strokeLinejoin="round">
      <path d="M706 428 738 428 744 425 755 418 775 420 790 426 812 435 838 441 858 446" />
      <path d="M736 386 744 379 756 375 765 366M780 380l22 12 22 8 12 1 5 11 7 6 6 9 10 4 3 9 1 7" />
    </g>
    <Labels items={redLabels} color="#e60000" />
    <Labels items={blueLabels} color="#12307a" />
    <Dots items={blues} color="#2a3d8c" r={6} />
    <Dots items={reds} color="#e60000" r={6.3} />
    <Star x={707} y={430} />
    <Star x={734} y={388} />
    <path d="M731 388 721 396 718 408 713 419 707 426" stroke="#22c2d8" strokeWidth="9" strokeLinecap="round" />
    <path d="m706 420 3 5 7 0-5 4 1 4-6-2-6 2 2-5-3-4 6-1z" fill="#38b8f2" />
    <path d="m734 378 3 9h-7z" fill="#2a64c8" />
    <Star x={765} y={365} />
    <Star x={793} y={385} />
    <Star x={802} y={393} />
    <Star x={782} y={427} />
    <Star x={857} y={447} />
    <Labels items={topLabels} color="#e60000" />
    <Labels items={[["3411", 729, 407]]} color="#12307a" />
  </svg>
);

/* ---------- data ---------- */

const tabs = ["工程", "地图", "插入", "分析", "视图", "编辑", "影像", "共享"];
const layers = ["合作", "CProject1_XYTableToPoint", "c2023site_XYTableToPoint", "luxian1", "ljuxian22", "Tibet"];
const favorites = [
  ["计算字段", "数据管理工具"],
  ["成对缓冲", "分析工具"],
  ["邻近分析", "分析工具"],
  ["成对融合", "分析工具"],
  ["空间连接", "分析工具"],
  ["成对相交", "分析工具"],
];
const recent: [string, string, boolean?][] = [
  ["地图转 KML", "(转换工具)"],
  ["创建要素类", "(数据管理..."],
  ["多值提取至点", "(Spatial..."],
  ["XY 表转点", "(数据管理工...", true],
  ["Excel 转表", "(转换工具)", true],
  ["按属性提取", "(Spatial An..."],
];

const RibbonGroups = () => (
  <Ribbon>
    <Group $w={244}>
      <GroupBody $pad={8} $gap={0}>
        <BigButton $w={36}><History />历史</BigButton>
        <SmallStack>
          <SmallButton><Model />模型构建器</SmallButton>
          <SmallButton><Python /><Latin>Python</Latin><Chevron /></SmallButton>
          <SmallButton><Environment />环境</SmallButton>
        </SmallStack>
        <BigButton $w={76}><CloudToolbox />即用型工具<LabelLine><Chevron /></LabelLine></BigButton>
        <BigButton $w={28}><Toolbox />工具</BigButton>
      </GroupBody>
      <GroupLabel $shift={15}>地理处理</GroupLabel>
      <Launcher aria-label="地理处理选项">
        <Icon w={9}><path d="M.5 8V.5H8M3 3l4 4M8.500 3v5.500H3" stroke="#555" /></Icon>
      </Launcher>
    </Group>
    <Group $w={278}>
      <GroupBody>
        <Gallery>
          <GalleryItem><PairBuffer />成对缓冲</GalleryItem>
          <GalleryItem><Summarize />范围内汇总</GalleryItem>
          <GalleryItem><SpatialJoin />空间连接</GalleryItem>
          <GalleryScroll>
            <button aria-label="上一行"><Chevron up color="#777" /></button>
            <button aria-label="下一行"><Chevron /></button>
            <button aria-label="更多"><Icon w={7}><path d="M0 .5h7M1 3l2.500 2.500L6 3" stroke="#444" strokeWidth="1.200" /></Icon></button>
          </GalleryScroll>
        </Gallery>
      </GroupBody>
      <GroupLabel>工具</GroupLabel>
    </Group>
    <Group $w={123}>
      <GroupBody>
        <BigButton $w={48} $off><FeatureAnalysis />要素分析<LabelLine><Chevron color="#888" /></LabelLine></BigButton>
        <BigButton $w={48} $off><RasterAnalysis />栅格分析<LabelLine><Chevron color="#888" /></LabelLine></BigButton>
      </GroupBody>
      <GroupLabel>门户</GroupLabel>
    </Group>
    <Group $w={507}>
      <GroupBody $pad={9}>
        <BigButton $w={48}><DataEngineering />数据工程</BigButton>
        <BigButton $w={72}><Suitability />适宜性建模器</BigButton>
        <BigButton $w={60}><Visibility />可见性分析</BigButton>
        <BigButton $w={50}><Exploratory />探索性<LabelLine>3D 分析<Chevron /></LabelLine></BigButton>
        <BigButton $w={48}><NetworkIcon />网络分析<LabelLine><Chevron /></LabelLine></BigButton>
        <BigButton $w={60}><Geostat />地统计向导</BigButton>
        <BigButton $w={58}><Business /><Latin>Business</Latin><LabelLine><Latin>Analysis</Latin><Chevron /></LabelLine></BigButton>
        <BigButton $w={52}><Interop /><Latin>Data</Latin><LabelLine><Latin>Interop</Latin><Chevron color="#999" /></LabelLine></BigButton>
      </GroupBody>
      <GroupLabel>工作流</GroupLabel>
    </Group>
    <Group $w={135}>
      <GroupBody>
        <BigButton $w={48}><RasterFunction />栅格函数<LabelLine><Chevron /></LabelLine></BigButton>
        <BigButton $w={60}><FunctionEditor />函数编辑器</BigButton>
      </GroupBody>
      <GroupLabel>栅格</GroupLabel>
    </Group>
    <Collapse aria-label="折叠功能区"><Chevron up w={10} color="#222" /></Collapse>
  </Ribbon>
);

const Contents = () => (
  <Panel $w={239}>
    <PanelHead>
      <h2>内容</h2>
      <button aria-label="菜单"><Chevron w={8} /></button>
      <button aria-label="固定"><Pin /></button>
      <button aria-label="关闭"><Close /></button>
    </PanelHead>
    <SearchRow $gap={8}>
      <Icon w={13} h={17}><path d="M.7 1h11.600L8 7v9H5V7z" fill="#d4d4d4" stroke="#777" /><path d="M1 1.500h11" stroke="#666" strokeWidth="2" /></Icon>
      <SearchBox>
        <input placeholder="搜索" aria-label="搜索内容" />
        <Lens />
        <Chevron w={8} color="#777" />
      </SearchBox>
    </SearchRow>
    <ViewTabs>
      <ViewStrip>
        <ViewTab $on aria-label="按绘制顺序">
          <Icon w={24}><path d="M5.500 9v11H14M6 12.500h8" stroke="#666" /><path d="M2 1h7l1 4H1zM1 6h9v2H1zM15 9h7l1 4h-9zM15 17h7l1 5h-9z" fill="#dfc83a" /></Icon>
        </ViewTab>
        <ViewTab aria-label="按数据源">
          <Icon w={22}><path d="M1 5v12q1 4 10 4t10-4V5" fill="#e9e9e9" stroke="#888" /><ellipse cx="11" cy="5" rx="10" ry="4" fill="#f6f6f6" stroke="#888" /></Icon>
        </ViewTab>
        <ViewTab aria-label="按选择">
          <Icon w={20}><path d="M.5.5h19v19H.5z" fill="#fff" /><path d="M1 1h5l4 8 3 10H1z" fill="#d3eaf9" /><path d="M.5.5h19v19H.5zM6 1l4 9 3 9M10 10q3-5 9-5" stroke="#666" /></Icon>
        </ViewTab>
        <ViewTab aria-label="按编辑">
          <Icon w={20}><path d="m2 15 13-13 3 3L5 18l-4 1z" fill="#e3cb3a" /><path d="m15 2 2-2 3 3-2 2z" fill="#e58a80" /><path d="m1 19 1-3 2 2z" fill="#555" /></Icon>
        </ViewTab>
        <ViewTab aria-label="按捕捉"><GridPlus /></ViewTab>
        <ViewTab aria-label="按标注">
          <Icon w={22}><path d="M2 11 12 2q2-1 8-2v12l-8 9-9-1z" fill="#f4df95" stroke="#c39a4a" /><path d="m9 12 7-7M12 15l6-6" stroke="#c39a4a" /><circle cx="6" cy="15" r="2" fill="#fff" stroke="#666" /><path d="m5 16-4 5" stroke="#666" /></Icon>
        </ViewTab>
      </ViewStrip>
      <MoreViews aria-label="更多"><Icon w={15} h={3}><path d="M0 0h3v3H0zM6 0h3v3H6zM12 0h3v3h-3z" fill="#333" /></Icon></MoreViews>
    </ViewTabs>
    <TreeTitle>绘制顺序</TreeTitle>
    <ul>
      <TreeRow><Expander open /><MapGlyph /><span>地图</span></TreeRow>
      {layers.map((name) => {
        const on = name === "Tibet";
        return (
          <TreeRow key={name} $indent={13}>
            <Expander open={on} />
            <Layer $on={on}>
              <Check type="checkbox" defaultChecked />
              {name}
            </Layer>
          </TreeRow>
        );
      })}
      <TreeRow $indent={28}><Swatch /></TreeRow>
      <TreeRow $indent={13} $bold><Expander open />独立表</TreeRow>
      {["c2023site", "CProject1"].map((t) => (
        <TreeRow key={t} $indent={24}><TableGlyph /><span />{t}</TreeRow>
      ))}
    </ul>
  </Panel>
);

const MapArea = () => (
  <MapPane>
    <MapTabs>
      <MapTab><MapGlyph />地图<button aria-label="关闭地图"><Close /></button></MapTab>
    </MapTabs>
    <MapView><MapDrawing /></MapView>
    <MapStatus>
      <ScaleBox>
        <select aria-label="比例尺" defaultValue="s"><option value="s">1:6,372,368</option></select>
        <Icon w={6} h={4}><path d="M0 0h6L3 4z" fill="#444" /></Icon>
      </ScaleBox>
      <Rule />
      <GridPlus s={17} />
      <Icon w={17} h={14}><path d="M2.500.5h13v13h-13zM6 1v12M9 1v12M12.500 1v12M3 3.500h12M3 7h12M3 10h12" stroke="#999" /></Icon>
      <Icon w={17}><path d="M1 3h4v3H1zM11 9h4v3h-4z" stroke="#555" /><path d="m3 12 8-8" stroke="#3f97d2" strokeDasharray="3 1" strokeWidth="1.500" /><path d="M13.500 1v5M11 3.500h5" stroke="#555" /><path d="M4 15.500h12M5 14q3-4 8-1z" stroke="#7dbce8" fill="#b9dff5" /><path d="M1 13h3v3H1z" fill="#4f9b57" /></Icon>
      <Icon w={17}><path d="M0 0h7v7H0z" fill="#cfe8cd" /><path d="M8 1v14M1 8h15" stroke="#555" strokeDasharray="2 1" /><path d="M6.500 6.500h3v3h-3z" fill="#fff" stroke="#555" /></Icon>
      <Icon w={17}><path d="M1 12V4l5 8V4" stroke="#3f97d2" strokeWidth="2" /><path d="M8.500 0v16M9 15l7-8" stroke="#777" /><path d="M10 2q4-1 4 4M12 4l2 3 2-3" stroke="#3f97d2" strokeWidth="1.500" /></Icon>
      <Rule />
      <Coordinates>101.2672634° 东 36.4271744° 北<button aria-label="坐标单位"><Chevron w={10} /></button></Coordinates>
    </MapStatus>
  </MapPane>
);

const Geoprocessing = () => (
  <Panel $w={200} $active>
    <PanelHead $active>
      <h2>地理处理</h2>
      <button aria-label="菜单"><Chevron w={8} /></button>
      <button aria-label="固定"><Pin side /></button>
      <button aria-label="关闭"><Close /></button>
    </PanelHead>
    <SearchRow $gap={6}>
      <button aria-label="后退"><Icon w={22} h={20}><circle cx="11" cy="10" r="8.500" stroke="#c0c0c0" /><path d="M16 10H7M11 5.500 6.500 10l4.500 4.500" stroke="#aaa" strokeWidth="1.500" /></Icon></button>
      <SearchBox $active>
        <Typed><input defaultValue="kml" aria-label="查找工具" /><Caret /></Typed>
        <Close s={8} />
        <Chevron w={8} color="#111" />
      </SearchBox>
      <button aria-label="添加"><Icon w={22} h={20}><circle cx="10" cy="10" r="8.500" stroke="#666" /><path d="M10 4v12M4 10h12" stroke="#555" strokeWidth="1.500" /></Icon></button>
    </SearchRow>
    <ToolTabs>
      <ToolTab $on>收藏夹</ToolTab>
      <ToolTab>工具箱</ToolTab>
    </ToolTabs>
    <Section><Chevron w={8} />工程收藏夹</Section>
    {favorites.map(([name, kit]) => (
      <ToolRow key={name}><Hammer /><ToolName><b>{name}</b>({kit})</ToolName></ToolRow>
    ))}
    <Section><Chevron w={8} />最近</Section>
    {recent.map(([name, kit, script]) => (
      <ToolRow key={name}>
        {script ? <Script /> : <Hammer />}
        <ToolName><b>{name}</b>{kit}</ToolName>
        <Tick /><Icon w={9} h={12}><path d="M2 3h7L5.500 7z" fill="#555" /></Icon>
      </ToolRow>
    ))}
    <Annotation width="192" height="52" fill="none" aria-hidden="true">
      <path d="M184 47H94Q50 47 27 41 2 35 2 26 2 16 24 10L38 8 62 7 80 5H155Q182 8 187 16V29Q187 35 178 39L157 51" stroke="#ff7f27" strokeWidth="2" />
    </Annotation>
  </Panel>
);

const Tasks = () => (
  <Taskbar>
    <TaskItem aria-label="开始"><Icon w={16} h={21}><path d="m0 13 7-1v9H0zM8 12l8-1v10H8z" fill="#000" /></Icon></TaskItem>
    <TaskItem aria-label="搜索"><Icon w={20} h={21}><circle cx="10" cy="18" r="8" stroke="#000" strokeWidth="2" /></Icon></TaskItem>
    <TaskItem aria-label="任务视图"><Icon w={17} h={21}><path d="M.5 11v3.500h10V11M.5 21v-3.500h10V21M15 11v2M15 15v6" stroke="#000" strokeWidth="1.500" /></Icon></TaskItem>
    <TaskItem aria-label="应用"><Icon w={14} h={21}><path d="m1 12 4 2h4l4-2v9H1z" fill="#1e3563" /><path d="M4 17h2M8 17h2" stroke="#fff" /></Icon></TaskItem>
    <TaskItem aria-label="浏览器"><Icon w={24} h={24}><circle cx="12" cy="20" r="12" fill="#1877c9" /><path d="M0 19Q2 8 12 8q12 1 12 13h-8q2-7-5-7-7 0-11 5z" fill="#2cbfd0" /><path d="M15 8q9 3 9 13h-8q3-6-1-13z" fill="#52d15c" /></Icon></TaskItem>
    <TaskItem $on aria-label="地图应用"><Icon w={22} h={28}><path d="m11 7 10 5v12H1V12z" fill="#0b6fe8" /><circle cx="11" cy="18" r="7" fill="#fff" /><path d="M8 12q5 0 5 4l-4 3-3-2zM14 16l4 2v5h-5z" fill="#0b6fe8" /></Icon></TaskItem>
    <Tray>
      <Icon w={9} h={21}><path d="m1 20 3.500-3L8 20" stroke="#000" strokeWidth="1.500" /></Icon>
      <Icon w={16} h={21}><path d="M1 14 15 12v9H1zM6 16q3-3 5 0l-3 3" stroke="#000" strokeWidth="1.400" /></Icon>
      <Icon w={14} h={21}><path d="M1 15h12v6M1 15v6M7 11v10M4 17h6M4 20h6" stroke="#444" /></Icon>
      <Icon w={16} h={24}><rect y="12" width="16" height="14" rx="3" fill="#1c82f5" /><circle cx="8" cy="18" r="4" stroke="#fff" strokeWidth="2" /></Icon>
      <time>23:10</time>
      <Icon w={16} h={21}><path d="M.5 12.500h15V21H.5z" fill="#fff" stroke="#000" /></Icon>
    </Tray>
  </Taskbar>
);

export default function App() {
  return (
    <Screen>
      <Global />
      <AppWindow>
        <TitleBar>
          <QuickTools>
            <QuickButton aria-label="新建"><NewProject /></QuickButton>
            <QuickButton aria-label="打开"><OpenProject /></QuickButton>
            <QuickButton $w={27} aria-label="保存"><SaveProject /></QuickButton>
            <QuickButton $w={21} aria-label="撤消"><Undo /></QuickButton>
            <QuickButton $w={15} aria-label="撤消列表"><Chevron /></QuickButton>
            <QuickButton $w={22} $dim aria-label="恢复"><Undo flip /></QuickButton>
            <QuickButton $w={17} aria-label="恢复列表"><Chevron /></QuickButton>
            <QuickButton $w={33} $dim aria-label="导出"><Export /></QuickButton>
            <QuickButton $w={12} aria-label="自定义"><Customize /></QuickButton>
          </QuickTools>
          <TitleCenter>
            2024ShrubPlan1
            <CommandSearch><Lens /><input placeholder="命令搜索(Alt+Q)" aria-label="命令搜索" /></CommandSearch>
          </TitleCenter>
          <TitleRight>
            <button>未登录</button>
            <Avatar aria-label="账户"><Person /></Avatar>
            <WinButton $w={36} aria-label="通知"><Bell /></WinButton>
            <WinButton $w={42}>?</WinButton>
            <WinButton aria-label="最小化"><Icon w={11}><path d="M0 5.500h11" stroke="#555" /></Icon></WinButton>
            <WinButton aria-label="最大化"><Icon w={11}><path d="M.5.5h10v10H.5z" stroke="#555" /></Icon></WinButton>
            <WinButton aria-label="关闭"><Close /></WinButton>
          </TitleRight>
        </TitleBar>
        <TabRow>
          {tabs.map((t, i) => (
            <Tab key={t} $first={i === 0} $active={t === "分析"}><span>{t}</span></Tab>
          ))}
          <ContextTabs $gap={19}><button>动画</button></ContextTabs>
          <ContextTabs $gap={19}><button>要素图层</button><button>标注</button><button>数据</button></ContextTabs>
        </TabRow>
        <RibbonGroups />
        <Body>
          <Contents />
          <MapArea />
          <Geoprocessing />
          <SideStrip><SideTab>地理处理</SideTab><SideThumb /></SideStrip>
        </Body>
      </AppWindow>
      <Tasks />
      <Watermark>CSDN @Nan_White_</Watermark>
    </Screen>
  );
}
